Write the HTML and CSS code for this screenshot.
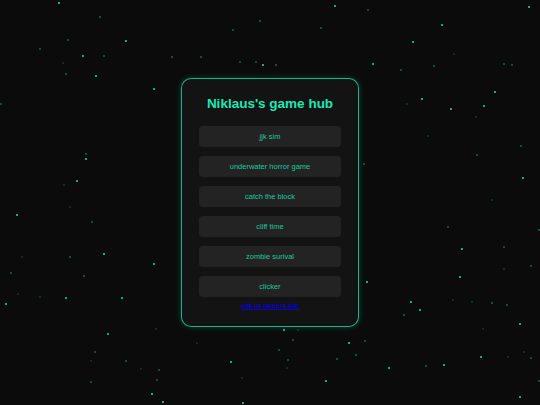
FILE: index.html
```html
<!DOCTYPE html>
<html>
<head>
<meta charset="utf-8">
<link rel="stylesheet" href="styles.css">
</head>
<body>
<svg class="stars" width="540" height="405" viewBox="0 0 540 405">
<g class="b">
<circle cx="59" cy="3" r="1.1"/><circle cx="126" cy="41" r="1.1"/><circle cx="83" cy="56" r="1.1"/><circle cx="96" cy="76" r="1.1"/><circle cx="154" cy="89" r="1.1"/>
<circle cx="335" cy="6" r="1.1"/><circle cx="263" cy="65" r="1.1"/>
<circle cx="529" cy="7" r="1.1"/><circle cx="442" cy="25" r="1.1"/><circle cx="413" cy="42" r="1.1"/><circle cx="373" cy="64" r="1.1"/><circle cx="495" cy="92" r="1.1"/><circle cx="422" cy="99" r="1.1"/><circle cx="451" cy="109" r="1.1"/><circle cx="484" cy="106" r="1.1"/>
<circle cx="86" cy="159" r="1.1"/><circle cx="77" cy="181" r="1.1"/><circle cx="17" cy="215" r="1.1"/><circle cx="104" cy="254" r="1.1"/><circle cx="154" cy="264" r="1.1"/>
<circle cx="523" cy="178" r="1.1"/><circle cx="462" cy="249" r="1.1"/>
<circle cx="367" cy="282" r="1.1"/><circle cx="460" cy="277" r="1.1"/><circle cx="411" cy="302" r="1.1"/><circle cx="420" cy="310" r="1.1"/><circle cx="520" cy="324" r="1.1"/><circle cx="481" cy="357" r="1.1"/><circle cx="389" cy="368" r="1.1"/><circle cx="444" cy="365" r="1.1"/><circle cx="520" cy="397" r="1.1"/>
<circle cx="6" cy="304" r="1.1"/><circle cx="66" cy="298" r="1.1"/><circle cx="122" cy="298" r="1.1"/><circle cx="108" cy="334" r="1.1"/><circle cx="152" cy="394" r="1.1"/><circle cx="163" cy="402" r="1.1"/>
<circle cx="284" cy="330" r="1.1"/><circle cx="231" cy="362" r="1.1"/><circle cx="349" cy="343" r="1.1"/><circle cx="326" cy="381" r="1.1"/><circle cx="243" cy="403" r="1.1"/>
</g>
<g class="s">
<circle cx="100" cy="17" r=".8"/><circle cx="68" cy="40" r=".8"/><circle cx="40" cy="49" r=".8"/><circle cx="104" cy="56" r=".8"/><circle cx="172" cy="57" r=".8"/><circle cx="66" cy="74" r=".8"/><circle cx="1" cy="104" r=".8"/>
<circle cx="260" cy="21" r=".8"/><circle cx="233" cy="30" r=".8"/><circle cx="321" cy="28" r=".8"/><circle cx="201" cy="57" r=".8"/><circle cx="240" cy="62" r=".8"/><circle cx="256" cy="62" r=".8"/><circle cx="276" cy="65" r=".8"/>
<circle cx="368" cy="10" r=".8"/><circle cx="401" cy="70" r=".8"/><circle cx="434" cy="66" r=".8"/><circle cx="504" cy="64" r=".8"/><circle cx="512" cy="65" r=".8"/>
<circle cx="86" cy="154" r=".8"/><circle cx="92" cy="222" r=".8"/><circle cx="70" cy="257" r=".8"/>
<circle cx="521" cy="146" r=".8"/><circle cx="477" cy="155" r=".8"/><circle cx="364" cy="164" r=".8"/><circle cx="448" cy="227" r=".8"/><circle cx="504" cy="247" r=".8"/><circle cx="539" cy="230" r=".8"/><circle cx="531" cy="266" r=".8"/>
<circle cx="404" cy="315" r=".8"/><circle cx="492" cy="303" r=".8"/><circle cx="507" cy="305" r=".8"/><circle cx="365" cy="341" r=".8"/><circle cx="531" cy="358" r=".8"/><circle cx="426" cy="366" r=".8"/><circle cx="539" cy="381" r=".8"/>
<circle cx="11" cy="273" r=".8"/><circle cx="84" cy="276" r=".8"/><circle cx="95" cy="352" r=".8"/><circle cx="126" cy="361" r=".8"/><circle cx="159" cy="370" r=".8"/><circle cx="157" cy="380" r=".8"/><circle cx="91" cy="382" r=".8"/>
<circle cx="293" cy="340" r=".8"/><circle cx="279" cy="350" r=".8"/><circle cx="288" cy="360" r=".8"/><circle cx="337" cy="359" r=".8"/><circle cx="356" cy="355" r=".8"/>
</g>
<g class="d">
<circle cx="63" cy="63" r=".7"/><circle cx="454" cy="54" r=".7"/><circle cx="407" cy="104" r=".7"/><circle cx="476" cy="117" r=".7"/>
<circle cx="64" cy="185" r=".7"/><circle cx="70" cy="207" r=".7"/><circle cx="22" cy="257" r=".7"/>
<circle cx="428" cy="136" r=".7"/><circle cx="492" cy="200" r=".7"/><circle cx="504" cy="269" r=".7"/>
<circle cx="453" cy="300" r=".7"/><circle cx="472" cy="302" r=".7"/><circle cx="483" cy="329" r=".7"/><circle cx="524" cy="352" r=".7"/><circle cx="508" cy="357" r=".7"/>
<circle cx="18" cy="294" r=".7"/><circle cx="40" cy="297" r=".7"/><circle cx="156" cy="329" r=".7"/><circle cx="91" cy="361" r=".7"/><circle cx="141" cy="369" r=".7"/>
<circle cx="298" cy="330" r=".7"/><circle cx="197" cy="343" r=".7"/><circle cx="287" cy="368" r=".7"/><circle cx="242" cy="378" r=".7"/>
</g>
</svg>
<main class="hub">
  <h1 class="title">Niklaus's game hub</h1>
  <div class="games">
    <button class="game">jjk sim</button>
    <button class="game">underwater horror game</button>
    <button class="game">catch the block</button>
    <button class="game">cliff time</button>
    <button class="game">zombie surival</button>
    <button class="game">clicker</button>
  </div>
  <a class="owner" href="#">visit us owner's site</a>
</main>
</body>
</html>
```

FILE: styles.css
```css
html, body {
  margin: 0;
  padding: 0;
  height: 100%;
}
body {
  background: #0b0b0b;
  font-family: "Liberation Sans", Arial, sans-serif;
  display: flex;
  align-items: center;
  justify-content: center;
  overflow: hidden;
  position: relative;
}
.stars {
  position: absolute;
  left: 0;
  top: 0;
  fill: #2be3b6;
}
.stars .b { opacity: 0.9; }
.stars .s { opacity: 0.7; }
.stars .d { opacity: 0.45; }
.hub {
  position: relative;
  width: 142px;
  padding: 16px 17px 16px;
  background: rgba(20, 20, 20, 0.95);
  border: 1px solid rgba(29, 233, 182, 0.75);
  border-radius: 10px;
  box-shadow: 0 0 6px rgba(29, 233, 182, 0.25);
  display: flex;
  flex-direction: column;
  align-items: center;
}
.title {
  margin: 0 0 14px;
  font-size: 13.5px;
  line-height: 17px;
  font-weight: bold;
  color: #1de9b6;
  white-space: nowrap;
}
.games {
  display: flex;
  flex-direction: column;
  gap: 9px;
  width: 100%;
}
.game {
  height: 21px;
  width: 100%;
  border: none;
  border-radius: 4px;
  background: #232323;
  color: #1dc99e;
  font-family: "Liberation Sans", Arial, sans-serif;
  font-size: 7.5px;
  padding: 0;
}
.owner {
  margin-top: 5px;
  font-size: 6.75px;
  line-height: 8px;
  color: #0000ee;
}
```
